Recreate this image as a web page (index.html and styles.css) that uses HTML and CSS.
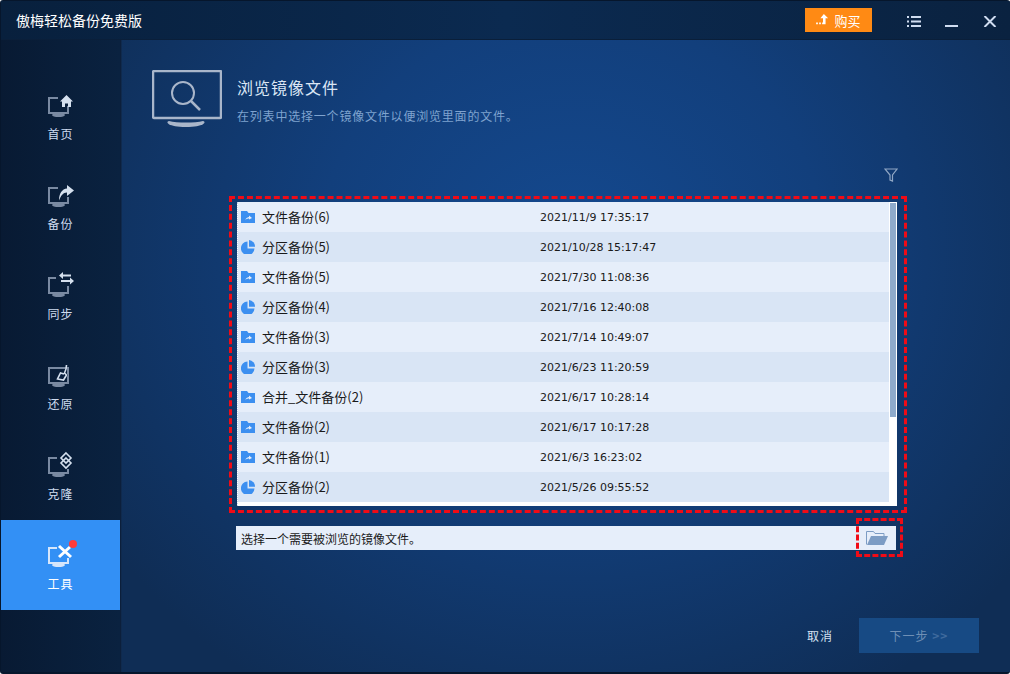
FILE: index.html
```html
<!DOCTYPE html>
<html lang="zh-CN">
  <head>
    <meta charset="UTF-8" />
    <title>傲梅轻松备份免费版</title>
    <link rel="stylesheet" href="styles.css">
  </head>
  <body>
    <div class="app">
      <header class="titlebar">
        <span class="app-name">傲梅轻松备份免费版</span>
        <button class="buy">
          <svg class="buy-icon" viewBox="0 0 16 14">
            <path d="M9 0l5 5h-3v7H8V5H5z" fill="#fff" />
            <path d="M0 10h2v2H0zM3.5 10h2v2h-2zM7 10h1v2H7z" fill="#fff" />
          </svg>
          购买
        </button>
        <svg class="win-btn menu-btn" viewBox="0 0 14 11">
          <path d="M0 0h2v2H0zM4 0h10v2H4zM0 4.500h2v2H0zM4 4.500h10v2H4zM0 9h2v2H0zM4 9h10v2H4z" fill="#cfdcf0" />
        </svg>
        <svg class="win-btn min-btn" viewBox="0 0 14 11">
          <path d="M0 9h13v2H0z" fill="#cfdcf0" />
        </svg>
        <svg class="win-btn close-btn" viewBox="0 0 14 11">
          <path d="M1.500 0l11 11M12.500 0l-11 11" stroke="#cfdcf0" stroke-width="2" fill="none" />
        </svg>
      </header>

      <div class="body-row">
        <nav class="sidebar">
          <a class="nav-item">
            <svg class="nav-icon" viewBox="0 -4 30 30">
              <path d="M12 4H3v15h19v-7" class="mon" />
              <ellipse cx="12.500" cy="21" rx="6.500" ry="2" class="stand" />
              <path d="M20.500 1L27 7.500h-2V13h-3V9.500h-3V13h-3V7.500h-2z" class="glyph" />
            </svg>
            <span>首页</span>
          </a>
          <a class="nav-item">
            <svg class="nav-icon" viewBox="0 -4 30 30">
              <path d="M12 4H3v15h19v-6" class="mon" />
              <ellipse cx="12.500" cy="21" rx="6.500" ry="2" class="stand" />
              <path d="M21 1l7 5.500L21 12V8.500c-4 0-6 3-8 8 0-7 3-11.500 8-12z" class="glyph" />
            </svg>
            <span>备份</span>
          </a>
          <a class="nav-item">
            <svg class="nav-icon" viewBox="0 -4 30 30">
              <path d="M10 4H3v15h19v-7" class="mon" />
              <ellipse cx="12.500" cy="21" rx="6.500" ry="2" class="stand" />
              <path d="M17 -2v2.500h8v2h-8V5l-4-3.500zM24 3.500l4 3.500-4 3.500V8h-9V6h9z" class="glyph" />
            </svg>
            <span>同步</span>
          </a>
          <a class="nav-item">
            <svg class="nav-icon" viewBox="0 -4 30 30">
              <path d="M3 4h19v15H3z" class="mon" />
              <ellipse cx="12.500" cy="21" rx="6.500" ry="2" class="stand" />
              <path d="M21 0c0 4-1 7-2 8l3 3-4 6-8-1 3-7 4 1c2-3 3-6 4-10z" fill="#0b2140" />
              <path d="M20.500 1c0 3-1 6-2 8l2 2-3 5-6-1 3-6 3.500 1" class="pen" />
            </svg>
            <span>还原</span>
          </a>
          <a class="nav-item">
            <svg class="nav-icon" viewBox="0 -4 30 30">
              <path d="M11 4H3v15h19v-4" class="mon" />
              <ellipse cx="12.500" cy="21" rx="6.500" ry="2" class="stand" />
              <path d="M20 -1l5 5-5 5-5-5zM20 4l5 5-5 5-5-5z" class="pen" />
            </svg>
            <span>克隆</span>
          </a>
          <a class="nav-item active">
            <svg class="nav-icon" viewBox="0 -4 30 30">
              <path d="M11 4H3v15h19v-5" class="mon" />
              <ellipse cx="12.500" cy="21" rx="6.500" ry="2" class="stand" />
              <path d="M13 2l12 11M24 3L13 13" class="tool" />
              <circle cx="27" cy="0" r="4" fill="#ff3b3b" />
            </svg>
            <span>工具</span>
          </a>
        </nav>

        <main class="main">
          <div class="page-head">
            <svg class="page-icon" viewBox="0 0 70 58">
              <rect x="1" y="1" width="68" height="47" fill="none" stroke="#a9b6ca" stroke-width="2.500" rx="1" />
              <circle cx="31" cy="23" r="11" fill="none" stroke="#a9b6ca" stroke-width="2" />
              <path d="M39 31l9 9" stroke="#a9b6ca" stroke-width="2.500" />
              <path d="M17 51c8 2 26 2 34 0 4 1 1 6-17 6S13 52 17 51z" fill="#a9b6ca" />
            </svg>
            <div class="page-text">
              <h1>浏览镜像文件</h1>
              <p>在列表中选择一个镜像文件以便浏览里面的文件。</p>
            </div>
          </div>

          <div class="filter-row">
            <svg class="filter-icon" viewBox="0 0 14 14">
              <path d="M1 1h12L8.500 7v6l-2.500-1V7z" fill="none" stroke="#8fa6c4" stroke-width="1.200" />
            </svg>
          </div>

          <div class="list-frame">
            <div class="list">
              <div class="rows" id="rows"></div>
              <div class="scroll"><div class="scroll-thumb"></div></div>
            </div>
          </div>

          <div class="path-row">
            <div class="path-box">选择一个需要被浏览的镜像文件。</div>
            <svg class="open-icon" viewBox="0 0 22 14">
              <path d="M.5 13.500V.5h7l1.500 2h9v3" fill="none" stroke="#7c9cc4" stroke-width="1" />
              <path d="M5 5h17l-4 9H1z" fill="#7c9cc4" />
            </svg>
            <div class="open-frame"></div>
          </div>

          <div class="actions">
            <a class="cancel">取消</a>
            <button class="next">下一步 <span class="chev">&gt;&gt;</span></button>
          </div>
        </main>
      </div>
    </div>

    <script>
      const backups = [
        ["file", "文件备份(6)", "2021/11/9 17:35:17"],
        ["part", "分区备份(5)", "2021/10/28 15:17:47"],
        ["file", "文件备份(5)", "2021/7/30 11:08:36"],
        ["part", "分区备份(4)", "2021/7/16 12:40:08"],
        ["file", "文件备份(3)", "2021/7/14 10:49:07"],
        ["part", "分区备份(3)", "2021/6/23 11:20:59"],
        ["file", "合并_文件备份(2)", "2021/6/17 10:28:14"],
        ["file", "文件备份(2)", "2021/6/17 10:17:28"],
        ["file", "文件备份(1)", "2021/6/3 16:23:02"],
        ["part", "分区备份(2)", "2021/5/26 09:55:52"]
      ]

      const icons = {
        file: '<path d="M0 1h6l1.500 2H14v10H0z" fill="#3c8ff0"/><path d="M4 10c1-2 3-3 4-3V5.500L11 8 8 9.500V8.500c-1 0-3 .5-4 1.500z" fill="#e6eefa"/>',
        part: '<path d="M6.500 1.500v7h7A6.800 6.800 0 1 1 6.500 1.500z" fill="#3c8ff0"/><path d="M8 0a6.500 6.500 0 0 1 6 6.800H8z" fill="#3c8ff0"/>'
      }

      document.getElementById("rows").innerHTML = backups
        .map(
          ([type, name, date]) => `
          <div class="row">
            <svg class="row-icon" viewBox="0 0 14 14">${icons[type]}</svg>
            <span class="row-name">${name}</span>
            <span class="row-date">${date}</span>
          </div>`
        )
        .join("")
    </script>
  </body>
</html>
```

FILE: styles.css
```css
* {
  box-sizing: border-box;
}

html,
body {
  margin: 0;
  height: 100%;
  background: #fff;
}

body {
  font-family: "Noto Sans CJK SC", "Liberation Sans", sans-serif;
  font-size: 13px;
  color: #1a1a1a;
}

.app {
  width: 1010px;
  height: 674px;
  display: flex;
  flex-direction: column;
  border-radius: 3px;
  overflow: hidden;
  background: #06162c;
  padding: 1px 0 2px 1px;
}

.titlebar {
  height: 39px;
  flex: none;
  display: flex;
  align-items: center;
  padding-left: 15px;
  background: linear-gradient(90deg, #08203d 0%, #0b2a50 50%, #0a2240 100%);
  border-bottom: 1px solid #0a1f3a;
}

.app-name {
  font-size: 14px;
  color: #fff;
}

.buy {
  margin-left: auto;
  width: 67px;
  height: 24px;
  border: none;
  padding: 0;
  background: #ff8a14;
  color: #fff;
  font: inherit;
  font-size: 13px;
  display: flex;
  align-items: center;
  justify-content: center;
  gap: 4px;
}

.buy-icon {
  width: 14px;
  height: 12px;
}

.win-btn {
  width: 14px;
  height: 11px;
  margin-top: 2px;
}

.menu-btn {
  margin-left: 35px;
}

.min-btn {
  margin-left: 24px;
}

.close-btn {
  margin-left: 24px;
  margin-right: 13px;
}

.body-row {
  flex: 1;
  display: flex;
  min-height: 0;
}

.sidebar {
  width: 120px;
  flex: none;
  padding-top: 30px;
  background: linear-gradient(90deg, #081a33 0%, #0a2240 100%);
  border-right: 1px solid #0c1f3b;
}

.nav-item {
  height: 90px;
  display: flex;
  flex-direction: column;
  align-items: center;
  padding-top: 20px;
  gap: 7px;
  color: #cfdcf0;
  font-size: 12px;
  letter-spacing: 1px;
  line-height: 14px;
}

.nav-item.active {
  background: #3390f5;
  color: #fff;
}

.nav-icon {
  width: 30px;
  height: 30px;
  overflow: visible;
}

.mon {
  fill: none;
  stroke: #7a8aa2;
  stroke-width: 2;
}

.stand {
  fill: #7a8aa2;
}

.glyph {
  fill: #d5e0ee;
}

.pen {
  fill: none;
  stroke: #d5e0ee;
  stroke-width: 1.600;
}

.active .mon {
  stroke: #d6e6fb;
}

.active .stand {
  fill: #d6e6fb;
}

.tool {
  fill: none;
  stroke: #fff;
  stroke-width: 3;
}

.main {
  flex: 1;
  padding: 30px 0 0 30px;
  background: radial-gradient(ellipse 560px 520px at 450px 210px, #14498f 0%, #123f7c 45%, #0f2d55 100%);
  border-left: 1px solid #0f2a4e;
}

.page-head {
  display: flex;
  height: 58px;
  gap: 15px;
}

.page-icon {
  width: 70px;
  height: 58px;
  flex: none;
}

.page-text h1 {
  margin: 6px 0 0;
  font-size: 16px;
  font-weight: normal;
  letter-spacing: 1px;
  line-height: 22px;
  color: #dbe6f5;
}

.page-text p {
  margin: 9px 0 0;
  font-size: 12px;
  letter-spacing: .8px;
  line-height: 18px;
  color: #7fa3cf;
}

.filter-row {
  height: 68px;
  padding: 40px 0 0 732px;
}

.filter-icon {
  display: block;
  width: 14px;
  height: 14px;
}

.list-frame {
  width: 678px;
  height: 317px;
  margin-left: 77px;
  border: 3px dashed #f00b16;
  padding: 3px 7px 4px 5px;
}

.list {
  height: 304px;
  display: flex;
  background: #fff;
  border-left: 1px dotted #c4d2e4;
}

.rows {
  width: 651px;
  flex: none;
}

.row {
  height: 30px;
  display: flex;
  align-items: center;
  padding-left: 3px;
  background: #e6eefa;
}

.row:nth-child(even) {
  background: #d9e5f5;
}

.row-icon {
  width: 14px;
  height: 14px;
  flex: none;
}

.row-name {
  width: 278px;
  margin-left: 7px;
  line-height: 16px;
}

.row-date {
  font-family: "DejaVu Sans", sans-serif;
  font-size: 11px;
}

.scroll {
  flex: 1;
  padding: 1px 1px 0;
}

.scroll-thumb {
  width: 6px;
  height: 214px;
  background: #8eaacb;
}

.path-row {
  position: relative;
  display: flex;
  align-items: center;
  width: 660px;
  height: 24px;
  margin: 13px 0 0 84px;
  background: #e6eefa;
  padding: 0 8px 0 5px;
}

.path-box {
  flex: 1;
  font-size: 12px;
}

.open-icon {
  width: 22px;
  height: 14px;
}

.open-frame {
  position: absolute;
  left: 620px;
  top: -8px;
  width: 47px;
  height: 39px;
  border: 3px dashed #f00b16;
}

.actions {
  display: flex;
  align-items: center;
  height: 35px;
  margin: 68px 0 0 655px;
}

.cancel {
  color: #d5e0f0;
  font-size: 12px;
  letter-spacing: 1px;
}

.next {
  width: 120px;
  height: 35px;
  margin-left: 26px;
  border: none;
  background: #174a84;
  color: #6f8fb5;
  font: inherit;
  font-size: 12px;
  letter-spacing: 1px;
}

.chev {
  color: #3f6a9e;
  font-weight: bold;
}
```
